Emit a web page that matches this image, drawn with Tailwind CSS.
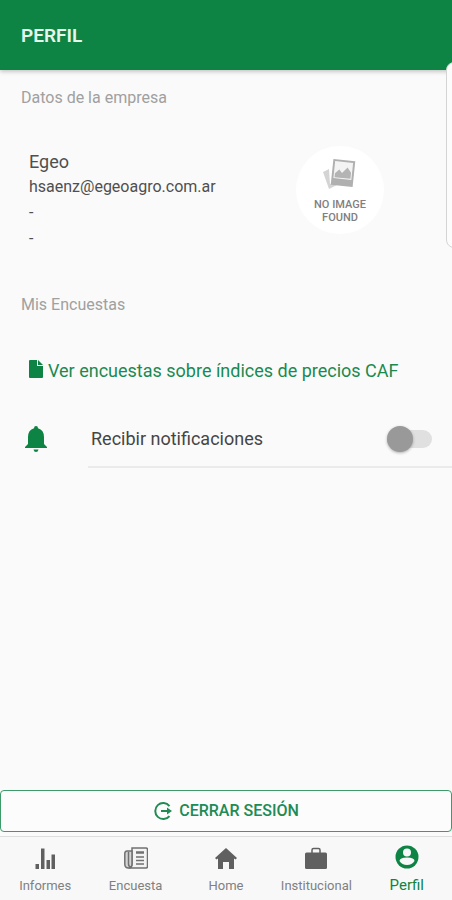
<!DOCTYPE html>
<html lang="es">
<head>
<meta charset="utf-8">
<meta name="viewport" content="width=device-width, initial-scale=1">
<title>Perfil</title>
<script src="https://cdn.jsdelivr.net/npm/@tailwindcss/browser@4"></script>
</head>
<body class="relative flex min-h-screen flex-col overflow-x-hidden bg-[#fafafa] font-['Roboto',sans-serif] text-[#4f4f4f]">
<header class="flex h-[70px] items-center bg-[#0d8443] px-[21px] shadow-[0_2px_4px_rgba(0,0,0,0.2)]">
  <h1 class="pt-[2px] text-[19px] leading-6 font-semibold text-[#e6f6ec]">PERFIL</h1>
</header>

<!-- Edge panel handle -->
<div class="absolute top-[62px] -right-3 h-[186px] w-[18px] rounded-lg border border-[#d4d4d4] bg-[#fcfcfc]"></div>

<main class="flex grow flex-col">
  <section>
    <h2 class="px-[21px] pt-4 text-base leading-6 text-[#a0a0a0]">Datos de la empresa</h2>
    <div class="flex items-start justify-between pt-8 pr-[68px] pl-[29px]">
      <div class="pt-2">
        <p class="text-lg leading-6">Egeo</p>
        <p class="text-base leading-[26px]">hsaenz@egeoagro.com.ar</p>
        <p class="text-base leading-[26px]">-</p>
        <p class="text-base leading-[26px]">-</p>
      </div>
      <div class="mt-1 flex size-[88px] flex-col items-center rounded-full bg-white pt-3">
        <svg class="h-8 w-9" viewBox="0 0 36 32" aria-hidden="true">
          <path d="M1 14l6-3 1 15 7 1-8 4z" fill="#d4d4d4"/>
          <g transform="rotate(6 21 15)">
            <rect x="10" y="2" width="22" height="26" fill="#b0b0b0"/>
            <rect x="12" y="4" width="18" height="17" fill="#f3f3f3"/>
            <path d="M13 20v-4l4-4 3 3 5-6 4 5v6z" fill="#b4b4b4"/>
          </g>
        </svg>
        <p class="mt-2 flex flex-col items-center font-['Roboto',sans-serif] text-[11px] leading-[13px] font-medium text-[#808080]"><span>NO IMAGE</span><span>FOUND</span></p>
      </div>
    </div>
  </section>

  <section class="pt-[41px]">
    <h2 class="px-[21px] text-base leading-6 text-[#a0a0a0]">Mis Encuestas</h2>
    <a href="#" class="mt-10 flex items-center gap-1 pl-7 text-lg leading-7 text-[#1a8a50]">
      <svg class="mb-1 h-5 w-4 shrink-0" viewBox="0 0 16 20" fill="#0d8443" aria-hidden="true"><path d="M2 1h7v6h6v11q0 1-1 1H2q-1 0-1-1V2q0-1 1-1z"/><path d="M10 1l5 5h-5z"/></svg>
      <span class="whitespace-nowrap">Ver encuestas sobre índices de precios CAF</span>
    </a>
    <div class="mt-10 flex items-center">
      <div class="flex w-[91px] shrink-0 pl-6">
        <svg class="h-[26px] w-6" viewBox="0 0 24 26" fill="#0d8443" aria-hidden="true"><path d="M12 0q2 0 2 2.200Q20 4 20 11v7l3 3v1H1v-1l3-3v-7q0-7 6-8.800Q10 0 12 0zM9.500 23.500h5q-.5 2.500-2.500 2.500t-2.500-2.500z"/></svg>
      </div>
      <label for="notif" class="flex-1 text-lg leading-7 text-[#454545]">Recibir notificaciones</label>
      <span class="relative mr-5 flex h-7 w-[45px] items-center">
        <input id="notif" type="checkbox" role="switch" class="peer h-[18px] w-[45px] cursor-pointer appearance-none rounded-full bg-[#e0e0e0]">
        <span class="pointer-events-none absolute left-0 size-[26px] rounded-full bg-[#999] shadow-[0_1px_3px_rgba(0,0,0,0.3)] peer-checked:translate-x-5 peer-checked:bg-[#0d8443]"></span>
      </span>
    </div>
    <div class="mt-[13px] ml-[88px] border-t-2 border-[#ebebeb]"></div>
  </section>

  <button type="button" class="mt-auto flex h-[42px] w-full items-center justify-center gap-[6px] rounded-sm border border-[#3d9b6a] bg-[#fcfcfc] text-base font-medium text-[#218a55]">
    <svg class="size-5" viewBox="0 0 20 20" fill="none" stroke="#218a55" stroke-width="2" aria-hidden="true"><path d="M16.500 5a8 8 0 1 0 0 10"/><path d="M8 10h8"/><path d="M14 6.500l5 3.500-5 3.500z" fill="#218a55" stroke="none"/></svg>
    CERRAR SESIÓN
  </button>
</main>

<nav class="mt-1 grid h-16 grid-cols-5 border-t border-[#dedede] bg-[#f8f8f8] text-[13px] leading-4 text-[#808080]">
  <a href="#" class="flex flex-col items-center gap-2 pt-[9px]">
    <svg class="h-6 w-6" viewBox="0 0 24 24" fill="#606060" aria-hidden="true"><path d="M2.500 18h3.500v5H2.500zM8 2.500h3.500V23H8zM13.500 14H17v9h-3.500zM18.500 8.500H22V23h-3.500z"/></svg>
    Informes
  </a>
  <a href="#" class="flex flex-col items-center gap-2 pt-[9px]">
    <svg class="h-6 w-6" viewBox="0 0 24 24" fill="none" stroke="#707070" stroke-width="1.500" aria-hidden="true"><path d="M8 2h14q1.500 0 1.500 1.500v17Q23.500 22 22 22H4.500Q8 21.500 8 18z" fill="#f3f3f3"/><path d="M8 5H3Q.8 5 .8 8v10q0 4 3.700 4Q8 22 8 18z" fill="#d4d4d4"/><path d="M4.500 6v12q0 3 3 3"/><path d="M12 6.500h8" stroke-width="2.500"/><path d="M12 11h8M12 14.500h8M12 18h8"/></svg>
    Encuesta
  </a>
  <a href="#" class="flex flex-col items-center gap-2 pt-[9px]">
    <svg class="h-6 w-6" viewBox="0 0 24 24" fill="#606060" aria-hidden="true"><path d="M12 2l11 10-1.500 1.500L20 12.500V23h-5v-7H9v7H4V12.500l-1.500 1L1 12z"/></svg>
    Home
  </a>
  <a href="#" class="flex flex-col items-center gap-2 pt-[9px]">
    <svg class="h-6 w-6" viewBox="0 0 24 24" aria-hidden="true"><path d="M8 7V4q0-1.500 1.500-1.500h5Q16 2.500 16 4v3" fill="none" stroke="#606060" stroke-width="1.500"/><rect x="1" y="6.500" width="22" height="16.500" rx="1.500" fill="#606060"/></svg>
    Institucional
  </a>
  <a href="#" aria-current="page" class="flex flex-col items-center gap-2 pt-2 text-[15px] text-[#0d8443]">
    <svg class="h-6 w-6" viewBox="0 0 24 24" aria-hidden="true"><circle cx="12" cy="12" r="11.500" fill="#0d8443"/><circle cx="12" cy="7.500" r="4" fill="#f8f8f8"/><path d="M4.500 16q0-3.500 7.500-3.500t7.500 3.500q-2.500 4-7.500 4t-7.500-4z" fill="#f8f8f8"/></svg>
    Perfil
  </a>
</nav>
</body>
</html>
